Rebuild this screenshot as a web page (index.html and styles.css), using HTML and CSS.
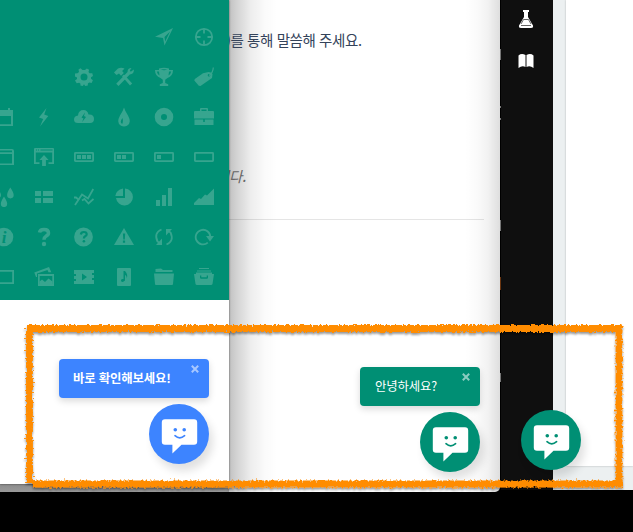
FILE: index.html
```html
<!DOCTYPE html>
<html lang="ko">
<head>
<meta charset="utf-8">
<title>Chat widget</title>
<link rel="stylesheet" href="styles.css">
</head>
<body>
<svg class="defs" width="0" height="0" aria-hidden="true">
  <defs>
    <symbol id="face" viewBox="0 0 60 60">
      <path fill="#fff" d="M16 15.300h29q3.200 0 3.200 3.200v19q0 3.200-3.200 3.200H32.500L23.400 49.600V40.700H16q-3.200 0-3.200-3.200V18.500q0-3.200 3.200-3.200z"/>
      <circle cx="26.300" cy="25.700" r="1.800" fill="currentColor"/><circle cx="35.200" cy="25.700" r="1.800" fill="currentColor"/>
      <path d="M26 31.700q4.700 4.300 9.600 0" fill="none" stroke="currentColor" stroke-width="1.700" stroke-linecap="round"/>
    </symbol>
    <symbol id="close" viewBox="0 0 8 8"><path d="M.8.8l6.400 6.400M7.200.8L.8 7.200" stroke="currentColor" stroke-width="2"/></symbol>
  </defs>
</svg>
<main class="desktop">
  <section class="window docs">
    <nav class="sidebar">
      <svg width="16" height="20" viewBox="0 0 16 20"><path d="M5 1h6v2h-1v5l5 8.500q.5 2.500-2 2.500H3q-2.500 0-2-2.500L6 8V3H5z" fill="#fff"/><path d="M5.500 10.500h5M3 16.500h10M5.500 10.500L3 15M10.500 10.500L13 15" fill="none" stroke="#555" stroke-width=".9"/></svg>
      <svg width="16" height="16" viewBox="0 0 16 16"><path d="M.5 2.500Q3.500-.2 7.500 2v12Q4 12.300.5 15zM8.500 2q4-2.200 7 .5V15q-3.500-2.700-7-1z" fill="#fff"/></svg>
    </nav>
    <div class="page"><div class="sheet"></div></div>
    <div class="launcher"><svg width="60" height="60"><use href="#face"/></svg></div>
  </section>
  <div class="slivers"><i class="s1"></i><i class="s2"></i><i class="s3"></i><i class="s4"></i><i class="s5"></i><i class="s6"></i></div>

  <section class="window article">
    <p class="lead">)를 통해 말씀해 주세요.</p>
    <p class="note">니다.</p>
    <hr>
    <div class="chat">
      <div class="bubble small"><span>안녕하세요?</span><svg width="8" height="8"><use href="#close"/></svg></div>
      <div class="launcher"><svg width="60" height="60"><use href="#face"/></svg></div>
    </div>
  </section>

  <section class="window promo">
    <div class="hero">
      <svg class="c5" viewBox="0 0 20 20"><path fill-rule="evenodd" d="M19 1L10.500 18.500 9 11 1 9.800zM16 4.500L10.500 10l.7 4.500z"/></svg>
      <svg viewBox="0 0 20 20"><g class="line"><circle cx="10" cy="10" r="8.200"/><path d="M10 2v4.500M10 13.500V18M2 10h4.500M13.500 10H18"/></g></svg>

      <svg class="c3" viewBox="0 0 20 20"><path fill-rule="evenodd" d="M8.500 3L6.500 1.300 4.500 2.600 5 5 3.500 6.300 1 6.500v3L3 10.500v1.500L1 13.500l1.700 2.700 2.500-.5 1.300 1.100-.1 1.800 2.400.4 1.200-1.800 1.200 1.800 2.600-.6.1-1.900 1.300-.9 2.400.3 1.300-2.600-1.900-1.600v-1.500l2-1.300-.7-2.600-2.700-.1L14.500 5l.6-2.300-2.300-1.200L11 3zM10 6.500a3.500 3.500 0 1 1 0 7 3.500 3.500 0 0 1 0-7z"/></svg>
      <svg viewBox="0 0 20 20"><path d="M0 5.500L4 1.500Q7 .2 10.500 1.500L8.200 4l1.600 2L7 8.800 5 6.500 2.500 8zM8 9.200l2-1.800 8.200 9-2.200 2.200zM13.500 5q0-4 4-4L15.800 3.500l1 1.300L19.800 2.500q.5 4.500-4 5L4.500 19 2.200 16.800z"/></svg>
      <svg viewBox="0 0 20 20"><path fill-rule="evenodd" d="M5 1.500Q10 0 15 1.500V3h4q0 6-5.500 8l-2.300 1.700V16l3 1.300V19H5.800v-1.700l3-1.300v-3.300L6.500 11Q1 9 1 3h4zM2.800 4.500Q3.500 7.500 5.500 8.500L5 4.500zM17.200 4.500H15l-.5 4q2-1 2.700-4zM6.700 2.600Q10 3.700 13.300 2.600 10 1.700 6.700 2.600z"/></svg>
      <svg viewBox="0 0 20 20"><path fill-rule="evenodd" d="M9 6.200L14.500 5q3 0 4 2l-.5 4L6.500 19 4.800 18.700.3 13.500.8 12zM15 7a1.300 1.300 0 1 0 0 2.600A1.300 1.300 0 0 0 15 7z"/><path class="line thin" d="M15 8.500q4-2.500 4.300-8"/></svg>

      <svg viewBox="0 0 20 20"><path fill-rule="evenodd" d="M1 3h3V1h2v2h8V1h2v2h3v16H1zM3 9v8.300h14V9z"/></svg>
      <svg viewBox="0 0 20 20"><path d="M12.500 1L5 10.500l4.200 1.500L6 19.500 14.300 9l-4.100-1.500z"/></svg>
      <svg viewBox="0 0 20 20"><path fill-rule="evenodd" d="M4 16Q0 16 0 12.500T4 8.500Q4.500 3 9.500 3q4 0 5 4.500Q20 7 20 12q0 4-4 4zM11 5.500L7.500 10.500l2 1-1.500 3.800 4-5.200-2-1z"/></svg>
      <svg viewBox="0 0 20 20"><path fill-rule="evenodd" d="M10 .5q1 3.500 4 8 4 7.500-1 10.200-3 1.600-6 0Q2 16 6 8.500q3-4.500 4-8zM8.500 11q-3.300 4-.3 6 1.300-2.500.3-6z"/></svg>
      <svg viewBox="0 0 20 20"><path fill-rule="evenodd" d="M10 .7a9.300 9.300 0 1 1 0 18.600A9.300 9.300 0 0 1 10 .7zM10 7a3 3 0 1 0 0 6 3 3 0 0 0 0-6z"/></svg>
      <svg viewBox="0 0 20 20"><path fill-rule="evenodd" d="M6 4V2q0-1 1-1h6q1 0 1 1v2h5q1 0 1 1v6.500H0V5q0-1 1-1zM7.500 4h5V2.500h-5zM.5 12.500h8.700V15h1.600v-2.500h8.700V18H.5z"/></svg>

      <svg viewBox="0 0 20 20"><path fill-rule="evenodd" d="M2 2h16q2 0 2 2v14H0V4q0-2 2-2zM2 7v9.500h16V7zM2 3.500v1.800h16V3.500z"/></svg>
      <svg viewBox="0 0 20 20"><path fill-rule="evenodd" d="M1 1h18q1 0 1 1v15h-5.500v-1.700h3.700V5.500H1.800v9.800h3.700V17H0V2q0-1 1-1zM2 2.500v1h1v-1zM4 2.500v1h1v-1zM6.500 2.500v1h12v-1z"/><path d="M10 8l4.600 5h-2.700v6H8.100v-6H5.400z"/></svg>
      <svg viewBox="0 0 20 20"><rect class="line" x=".9" y="5.900" width="18.200" height="8.200" rx=".5"/><path d="M3 8h4v4H3zM8 8h4v4H8zM13 8h4v4h-4z"/></svg>
      <svg viewBox="0 0 20 20"><rect class="line" x=".9" y="5.900" width="18.200" height="8.200" rx=".5"/><path d="M3 8h4v4H3zM8 8h4v4H8z"/></svg>
      <svg viewBox="0 0 20 20"><rect class="line" x=".9" y="5.900" width="18.200" height="8.200" rx=".5"/><path d="M3 8h4v4H3z"/></svg>
      <svg viewBox="0 0 20 20"><rect class="line" x=".9" y="5.900" width="18.200" height="8.200" rx=".5"/></svg>

      <svg viewBox="0 0 20 20"><path d="M16.300.5q3.400 5 3.400 7.600a3.300 3.300 0 0 1-6.600 0Q13 5.500 16.300.5zM10 9.500q3.200 5 3.200 7.400a3.200 3.200 0 0 1-6.400 0q0-2.400 3.200-7.400zM4 2q3 4 3 6a3 3 0 0 1-6 0q0-2 3-6z"/></svg>
      <svg viewBox="0 0 20 20"><path d="M1 4h6v5H1zM9 4h10v5H9zM1 11h6v5H1zM9 11h10v5H9z"/></svg>
      <svg viewBox="0 0 20 20"><g class="line"><path d="M1 18L8 7.500l6 4 5.300-9.500"/><path d="M0 10.500h2l3 2.500M8 13.500l2.500-1.500 4 4.500 5-4.500"/></g></svg>
      <svg viewBox="0 0 20 20"><path d="M11 1.500a8.500 8.500 0 1 1-9 9.500h9zM9 1.500V9H1.300Q2 3 9 1.500z"/></svg>
      <svg viewBox="0 0 20 20"><path d="M2 13h4v6H2zM8 8h4v11H8zM14 1h4v18h-4z"/></svg>
      <svg viewBox="0 0 20 20"><path d="M0 18v-2l5-5 2 1 4-4.500 2 1 7-7V18z"/></svg>

      <svg viewBox="0 0 20 20"><circle cx="10" cy="10" r="9.300"/><text class="cut serif" x="10" y="15.500">i</text></svg>
      <svg viewBox="0 0 20 20"><path class="line bold" d="M5.500 5.500Q6 2.500 10 2.500q4.500 0 4.500 3.500 0 2-2.500 3.200-2 1.200-2 3.600"/><circle cx="10" cy="17" r="2.200"/></svg>
      <svg viewBox="0 0 20 20"><circle cx="9.500" cy="10" r="9.400"/><path class="cutline" d="M6.800 7.500q.3-2.500 3-2.500 2.900 0 2.900 2.300 0 1.300-1.500 2-1.300.8-1.300 2.200"/><circle class="hole" cx="9.900" cy="14.300" r="1.300"/></svg>
      <svg viewBox="0 0 20 20"><path fill-rule="evenodd" d="M10 1l10 17H0zM8.900 6.500l.4 6h1.500l.4-6zM8.900 13.500v2.200h2.200v-2.200z"/></svg>
      <svg viewBox="0 0 20 20"><path class="line" d="M7.500 2.500Q-.5 6 3.500 14.500l2 1.500M12.500 17.500q8-3.500 4-12l-2-1.500"/><path d="M2 18h6v-6.500zM18 2h-6v6.500z"/></svg>
      <svg viewBox="0 0 20 20"><path class="line" d="M16.300 10A7.300 7.300 0 1 0 13.800 15.600"/><path d="M12 9h8l-4 5.500z"/></svg>

      <svg viewBox="0 0 20 20"><path fill-rule="evenodd" d="M0 3h20v14H0zM1.800 4.800v10.400h16.400V4.800z"/></svg>
      <svg viewBox="0 0 20 20"><path fill-rule="evenodd" d="M.3 5.500L15 0l2.300 5.200H14.500L13.500 3 3 6.500v3.500L2 10zM4 7h16v12H4zM5.700 9v8H18.300V9z"/><path d="M5.500 14.500l2.500-2 3 2.500 3.500-3.500 2 1.500 2 1.500V17.500H5.500z"/></svg>
      <svg viewBox="0 0 20 20"><path fill-rule="evenodd" d="M0 3h20v3h-2v2h2v3h-2v2h2v4H0v-3h2v-2H0V9h2V7H0zM8 6.500v7l5-3.500z"/></svg>
      <svg viewBox="0 0 20 20"><path fill-rule="evenodd" d="M4 1h12q1 0 1 1v16q0 1-1 1H4q-1 0-1-1V2q0-1 1-1zM9.500 4v8Q6.500 11.500 7 14q1.500 2 4-.5V8q2 .5 1.500 3.500Q14.500 8 11 4z"/></svg>
      <svg viewBox="0 0 20 20"><path d="M1.500 5V2q2-.5 5.500-.5L9 3h9.500v2zM0 6.500h20L19 17q0 1-1 1H2q-1 0-1-1z"/></svg>
      <svg viewBox="0 0 20 20"><path fill-rule="evenodd" d="M5 1h10v1H5zM3 3.500h14v1H3zM2 5.500h16V7h2l-1.500 10q-.3 1-1.500 1H3q-1.200 0-1.500-1L0 7h2zM6 8.500v2q0 1.200 1.200 1.200h5.600q1.200 0 1.200-1.200v-2h-1.300v1.700H7.300V8.500z"/></svg>
    </div>
    <div class="chat">
      <div class="bubble"><span>바로 확인해보세요!</span><svg width="8" height="8"><use href="#close"/></svg></div>
      <div class="launcher"><svg width="60" height="60"><use href="#face"/></svg></div>
    </div>
  </section>

  <svg class="marker" width="633" height="532" viewBox="0 0 633 532">
    <defs>
      <filter id="crayon" filterUnits="userSpaceOnUse" x="0" y="300" width="633" height="232">
        <feTurbulence type="fractalNoise" baseFrequency=".5" numOctaves="2" seed="8" result="n"/>
        <feDisplacementMap in="SourceGraphic" in2="n" scale="6" xChannelSelector="R" yChannelSelector="G" result="rough"/>
        <feDropShadow in="rough" dx="0" dy="2" stdDeviation="1.300" flood-color="#000" flood-opacity=".4"/>
      </filter>
    </defs>
    <path filter="url(#crayon)" d="M26.500 328.500H622.500M619 325.500V487M29.500 325.500V483M32 484H623" fill="none" stroke="#ff8c05" stroke-width="6.800"/>
  </svg>
</main>
</body>
</html>
```
FILE: styles.css
```css
* { box-sizing: border-box; }
body { margin: 0; font-family: "Noto Sans CJK KR", sans-serif; }
.defs { position: absolute; }
.desktop { position: relative; width: 633px; height: 532px; overflow: hidden; background: #000; }
.window { position: absolute; top: 0; overflow: hidden; }

.docs { left: 500px; width: 133px; height: 490px; display: flex; background: #ecf0f1; }
.sidebar { width: 53px; background: #0f0f0f; display: flex; flex-direction: column; align-items: center; padding: 9px 1px 0 0; gap: 24px; }
.page { flex: 1; padding-left: 13px; }
.sheet { height: 466px; background: #fff; box-shadow: 0 0 2px rgba(0,0,0,.25); }
.docs .launcher { position: absolute; left: 21px; top: 410px; }

.slivers { position: absolute; left: 500px; top: 0; width: 1px; height: 490px; background: #000; }
.slivers i { position: absolute; left: 0; width: 1px; background: #777; }
.slivers .s1 { top: 49px; height: 11px; }
.slivers .s2 { top: 106px; height: 2px; }
.slivers .s3 { top: 118px; height: 2px; }
.slivers .s4 { top: 220px; height: 11px; }
.slivers .s5 { top: 277px; height: 13px; background: #6a3510; }
.slivers .s6 { top: 373px; height: 9px; }

.article {
  left: 0; width: 500px; height: 492px; border-radius: 0 0 5px 0;
  background:
    linear-gradient(#8c8c8c, #999) 0 484px / 229px 8px no-repeat,
    linear-gradient(to right, rgba(0,0,0,.24), rgba(0,0,0,.16) 20%, rgba(0,0,0,.07) 45%, rgba(0,0,0,.02) 75%, transparent) 229px 0 / 48px 100% no-repeat,
    linear-gradient(to left, rgba(0,0,0,.13), rgba(0,0,0,.05) 35%, rgba(0,0,0,.02) 65%, transparent) 465px 0 / 35px 100% no-repeat,
    #fff;
  padding: 29px 16px 0 226px;
}
.article p { margin: 0; line-height: 22px; white-space: nowrap; }
.lead { color: #34435a; font-size: 14.5px; letter-spacing: -.4px; }
.article .note { margin: 114px 0 0 -10px; color: #666; font-size: 14.5px; font-style: italic; letter-spacing: -.3px; }
.article hr { margin: 32px 0 0; border: 0; border-top: 1px solid rgba(0,0,0,.1); }

.promo { left: 0; width: 229px; height: 484px; background: #fff; box-shadow: 0 0 2px rgba(0,0,0,.6); }
.hero {
  height: 300px; margin-left: -16px; padding-top: 17px; background: #008f74; color: #37a58f;
  display: grid; grid-template-columns: repeat(6, 40px); grid-auto-rows: 40px; place-items: center;
}
.hero svg { width: 20px; height: 20px; fill: currentColor; }
.hero .c5 { grid-column: 5; }
.hero .c3 { grid-column: 3; }
.hero .line { fill: none; stroke: currentColor; stroke-width: 1.8; }
.hero .thin { stroke-width: 1.2; }
.hero .bold { stroke-width: 3.5; }
.hero .cutline { fill: none; stroke: #008f74; stroke-width: 2.2; }
.hero .hole { fill: #008f74; }
.hero .cut { fill: #008f74; font: italic bold 17px "Liberation Serif", serif; text-anchor: middle; }

.chat { position: absolute; right: 20px; bottom: 20px; display: flex; flex-direction: column; align-items: flex-end; gap: 6px; }
.bubble {
  width: 150px; height: 39px; padding: 6px 10px 0 14px; border-radius: 4px; color: #fff; background: #3d84ff;
  display: flex; justify-content: space-between; align-items: flex-start;
  font-size: 12.4px; font-weight: 700; line-height: 26px; letter-spacing: -.15px; white-space: nowrap; box-shadow: 0 3px 7px rgba(0,0,0,.15);
}
.bubble svg { color: rgba(255,255,255,.55); }
.small { width: 120px; padding-left: 15px; background: #008f74; font-weight: 400; }
.launcher { width: 60px; height: 60px; border-radius: 50%; color: #008f74; background: #008f74; box-shadow: 4px 7px 8px rgba(0,0,0,.12); }
.launcher svg { display: block; }
.promo .launcher { color: #3d84ff; background: #3d84ff; }

.marker { position: absolute; left: 0; top: 0; }
```
